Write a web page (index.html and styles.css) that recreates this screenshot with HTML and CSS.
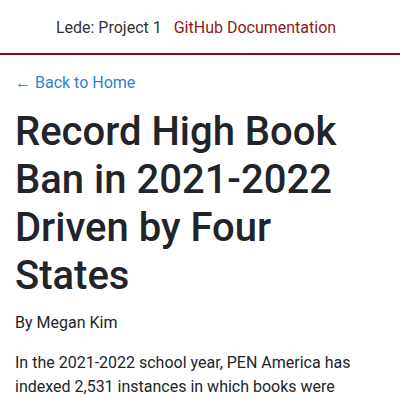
FILE: index.html
```html
<!DOCTYPE html>
<html lang="en">
<head>
<meta charset="utf-8">
<title>Record High Book Ban</title>
<link rel="stylesheet" href="styles.css">
</head>
<body>
<header class="site-header">
  <nav class="nav">
    <span class="brand">Lede: Project 1</span>
    <a class="nav-link" href="#">GitHub Documentation</a>
  </nav>
</header>
<main class="content">
  <a class="back" href="#">← Back to Home</a>
  <h1 class="title">Record High Book Ban in 2021-2022 Driven by Four States</h1>
  <p class="byline">By Megan Kim</p>
  <p class="body-text">In the 2021-2022 school year, PEN America has indexed 2,531 instances in which books were removed from schools.</p>
</main>
</body>
</html>
```
FILE: styles.css
```css
* { box-sizing: border-box; }
html, body { margin: 0; padding: 0; }
body {
  font-family: Roboto, "Noto Sans", sans-serif;
  font-size: 16px;
  line-height: 24px;
  color: #212529;
  background: #fff;
}
.site-header {
  border-bottom: 2px solid #7f1010;
}
.nav {
  display: flex;
  justify-content: center;
  gap: 12px;
  padding: 16px 8px 13px 0;
}
.brand { color: #333; }
.nav-link { color: #8b1a1a; text-decoration: none; }
.content {
  padding: 16px 15px 0;
}
.back {
  display: block;
  color: #2d7fd1;
  text-decoration: none;
}
.title {
  margin: 13px 0 0;
  font-size: 40px;
  line-height: 48px;
  font-weight: 500;
  color: #212529;
}
.byline { margin: 11px 0 0; }
.body-text { margin: 16px 0 0; }
```
